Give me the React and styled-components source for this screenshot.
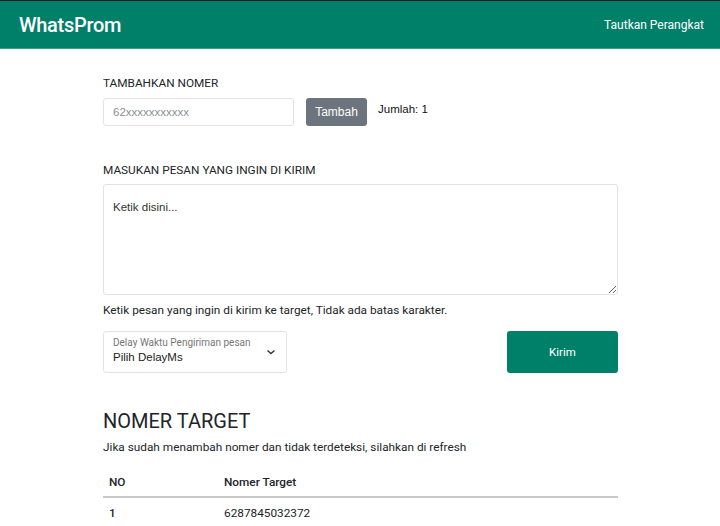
import React from 'react';
import styled, { createGlobalStyle } from 'styled-components';

const GlobalStyle = createGlobalStyle`
  * { box-sizing: border-box; }
  body {
    margin: 0;
    background: #ffffff;
    font-family: 'Roboto', 'Liberation Sans', sans-serif;
    color: #212529;
  }
`;

const Navbar = styled.header`
  height: 49px;
  background-color: #008069;
  border-top: 1px solid #1e1e1e;
  border-bottom: 1px solid #3a9d8a;
  display: flex;
  align-items: center;
  justify-content: space-between;
  padding: 0 16px 0 19px;
`;

const Brand = styled.div`
  color: #ffffff;
  font-size: 20px;
  font-weight: 500;
  letter-spacing: -0.3px;
`;

const NavLink = styled.a`
  color: #ffffff;
  font-size: 12px;
  text-decoration: none;
`;

const Main = styled.main`
  width: 516px;
  margin: 0 auto;
  padding: 27px 0 0 1px;
`;

const Label = styled.div`
  font-size: 11.8px;
  text-transform: uppercase;
  color: #212529;
  margin-bottom: ${p => p.$gap || 8}px;
`;

const Row = styled.div`
  display: flex;
  align-items: ${p => p.$align || 'flex-start'};
  justify-content: ${p => p.$justify || 'flex-start'};
  gap: ${p => p.$gap || 0}px;
`;

const TextInput = styled.input`
  width: 191px;
  height: 28px;
  border: 1px solid #e3e3e3;
  border-radius: 3px;
  padding: 0 9px;
  font-family: 'Liberation Sans', Arial, sans-serif;
  font-size: 11.5px;
  outline: none;
  &::placeholder { color: #8a8f94; }
`;

const GreyButton = styled.button`
  height: 28px;
  width: 61px;
  margin-left: 12px;
  background: #6c757d;
  color: #ffffff;
  border: none;
  border-radius: 3px;
  font-family: 'Liberation Sans', Arial, sans-serif;
  font-size: 12px;
`;

const Count = styled.span`
  margin-left: 11px;
  margin-top: 5px;
  font-family: 'Liberation Sans', Arial, sans-serif;
  font-size: 11.5px;
  font-weight: 500;
  color: #111;
`;

const Section = styled.section`
  margin-top: ${p => p.$top || 0}px;
`;

const TextArea = styled.textarea`
  display: block;
  width: 515px;
  height: 111px;
  border: 1px solid #e3e3e3;
  border-radius: 3px;
  padding: 16px 9px;
  font-family: 'Liberation Sans', Arial, sans-serif;
  font-size: 11.5px;
  outline: none;
  &::placeholder { color: #333; }
`;

const Help = styled.p`
  font-size: 11.8px;
  margin: 8px 0 0;
  color: #212529;
`;

const SelectBox = styled.div`
  width: 184px;
  height: 42px;
  border: 1px solid #e3e3e3;
  border-radius: 3px;
  padding: 5px 9px 0;
  position: relative;
`;

const FloatLabel = styled.div`
  font-size: 10px;
  color: #777;
  line-height: 12px;
`;

const SelectValue = styled.div`
  font-family: 'Liberation Sans', Arial, sans-serif;
  font-size: 11.5px;
  color: #222;
  margin-top: 2px;
`;

const Chevron = styled.svg`
  position: absolute;
  right: 10px;
  top: 16px;
`;

const PrimaryButton = styled.button`
  width: 111px;
  height: 42px;
  padding-bottom: 2px;
  background: #008069;
  color: #ffffff;
  border: none;
  border-radius: 3px;
  font-family: 'Roboto', sans-serif;
  font-size: 11.5px;
`;

const Heading = styled.h2`
  font-size: 20px;
  font-weight: 400;
  margin: 0;
  color: #212529;
`;

const SubText = styled.p`
  font-size: 11.8px;
  margin: 7px 0 0;
`;

const Table = styled.table`
  width: 515px;
  border-collapse: collapse;
  margin-top: 13px;
  font-size: 11.8px;
`;

const Th = styled.th`
  text-align: left;
  font-weight: 500;
  padding: 8px 6px 7px;
  border-bottom: 2px solid #c8c8c8;
  width: ${p => p.$w || 'auto'};
`;

const Td = styled.td`
  padding: 8px 6px;
  font-weight: ${p => (p.$bold ? 500 : 400)};
`;

export default function App() {
  return (
    <>
      <GlobalStyle />
      <Navbar>
        <Brand>WhatsProm</Brand>
        <NavLink href="#">Tautkan Perangkat</NavLink>
      </Navbar>
      <Main>
        <Section>
          <Label $gap={8}>Tambahkan Nomer</Label>
          <Row>
            <TextInput placeholder="62xxxxxxxxxxx" />
            <GreyButton>Tambah</GreyButton>
            <Count>Jumlah: 1</Count>
          </Row>
        </Section>
        <Section $top={37}>
          <Label $gap={7}>Masukan pesan yang ingin di kirim</Label>
          <TextArea placeholder="Ketik disini..." />
          <Help>Ketik pesan yang ingin di kirim ke target, Tidak ada batas karakter.</Help>
        </Section>
        <Section $top={14}>
          <Row $justify="space-between">
            <SelectBox>
              <FloatLabel>Delay Waktu Pengiriman pesan</FloatLabel>
              <SelectValue>Pilih DelayMs</SelectValue>
              <Chevron width="10" height="8" viewBox="0 0 10 8">
                <path d="M1.5 2.5 L5 5.5 L8.5 2.5" fill="none" stroke="#333" strokeWidth="1.4" />
              </Chevron>
            </SelectBox>
            <PrimaryButton>Kirim</PrimaryButton>
          </Row>
        </Section>
        <Section $top={36}>
          <Heading>NOMER TARGET</Heading>
          <SubText>Jika sudah menambah nomer dan tidak terdeteksi, silahkan di refresh</SubText>
          <Table>
            <thead>
              <tr>
                <Th $w="115px">NO</Th>
                <Th>Nomer Target</Th>
              </tr>
            </thead>
            <tbody>
              <tr>
                <Td $bold>1</Td>
                <Td>6287845032372</Td>
              </tr>
            </tbody>
          </Table>
        </Section>
      </Main>
    </>
  );
}
